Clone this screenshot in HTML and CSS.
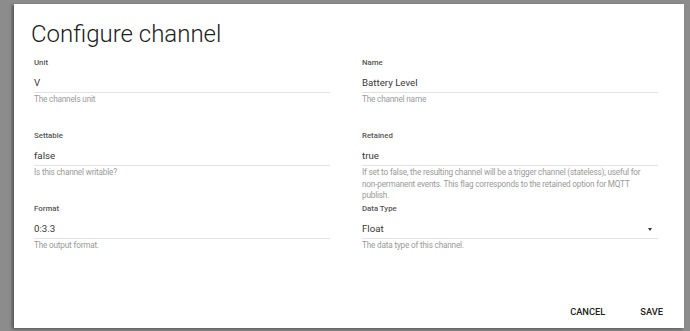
FILE: index.html
```html
<!DOCTYPE html>
<html lang="en">
<head>
    <meta charset="UTF-8">
    <meta name="viewport" content="width=device-width, initial-scale=1.0">
    <title>Configure channel</title>
    <link rel="stylesheet" href="styles.css">
</head>
<body>
    <div class="dialog">
        <h1 class="dialog-title">Configure channel</h1>
        <form class="fields">
            <div class="field">
                <label class="field-label">Unit</label>
                <div class="field-value">V</div>
                <div class="field-help">The channels unit</div>
            </div>
            <div class="field">
                <label class="field-label">Name</label>
                <div class="field-value">Battery Level</div>
                <div class="field-help">The channel name</div>
            </div>
            <div class="field">
                <label class="field-label">Settable</label>
                <div class="field-value">false</div>
                <div class="field-help">Is this channel writable?</div>
            </div>
            <div class="field">
                <label class="field-label">Retained</label>
                <div class="field-value">true</div>
                <div class="field-help">If set to false, the resulting channel will be a trigger channel (stateless), useful for non-permanent events. This flag corresponds to the retained option for MQTT<br>publish.</div>
            </div>
            <div class="field">
                <label class="field-label">Format</label>
                <div class="field-value">0:3.3</div>
                <div class="field-help">The output format.</div>
            </div>
            <div class="field">
                <label class="field-label">Data Type</label>
                <div class="field-value select">Float<span class="caret"></span></div>
                <div class="field-help">The data type of this channel.</div>
            </div>
        </form>
        <div class="actions">
            <button type="button">Cancel</button>
            <button type="button">Save</button>
        </div>
    </div>
</body>
</html>
```

FILE: styles.css
```css
body {
    margin: 0;
    height: 331px;
    overflow: hidden;
    background: #8c8c8c;
    font-family: Roboto, "Liberation Sans", sans-serif;
}

.dialog {
    box-sizing: border-box;
    display: flex;
    flex-direction: column;
    width: 670px;
    height: 324px;
    margin: 4px 0 0 14px;
    padding: 0 26px 0 20px;
    background: #fff;
    box-shadow: -2px 1px 3px rgba(0, 0, 0, 0.4);
}

.dialog-title {
    margin: 16px 0 0 -3px;
    font-size: 24px;
    line-height: 28px;
    font-weight: 300;
    color: #212121;
}

.fields {
    display: grid;
    grid-template-columns: 1fr 1fr;
    grid-auto-rows: 73px;
    column-gap: 32px;
    margin-top: 10px;
}

.field-label {
    display: block;
    font-size: 7.8px;
    line-height: 10px;
    font-weight: 500;
    color: #555;
}

.field-value {
    position: relative;
    margin-top: 8px;
    padding-bottom: 2px;
    font-size: 9.7px;
    line-height: 14px;
    color: #383838;
    border-bottom: 1px solid #e2e2e2;
}

.caret {
    position: absolute;
    right: 6px;
    top: 6px;
    border-left: 2.5px solid transparent;
    border-right: 2.5px solid transparent;
    border-top: 3px solid #333;
}

.field-help {
    max-width: 284px;
    margin-top: 1px;
    font-size: 8.2px;
    line-height: 11.5px;
    letter-spacing: -0.18px;
    color: #9a9a9a;
}

.actions {
    display: flex;
    justify-content: flex-end;
    gap: 19px;
    margin-top: auto;
    margin-right: -13px;
    padding-bottom: 5px;
}

.actions button {
    height: 24px;
    padding: 0 8px;
    background: none;
    border: none;
    font-family: inherit;
    font-size: 9.3px;
    font-weight: 500;
    text-transform: uppercase;
    color: #212121;
    cursor: pointer;
}
```
